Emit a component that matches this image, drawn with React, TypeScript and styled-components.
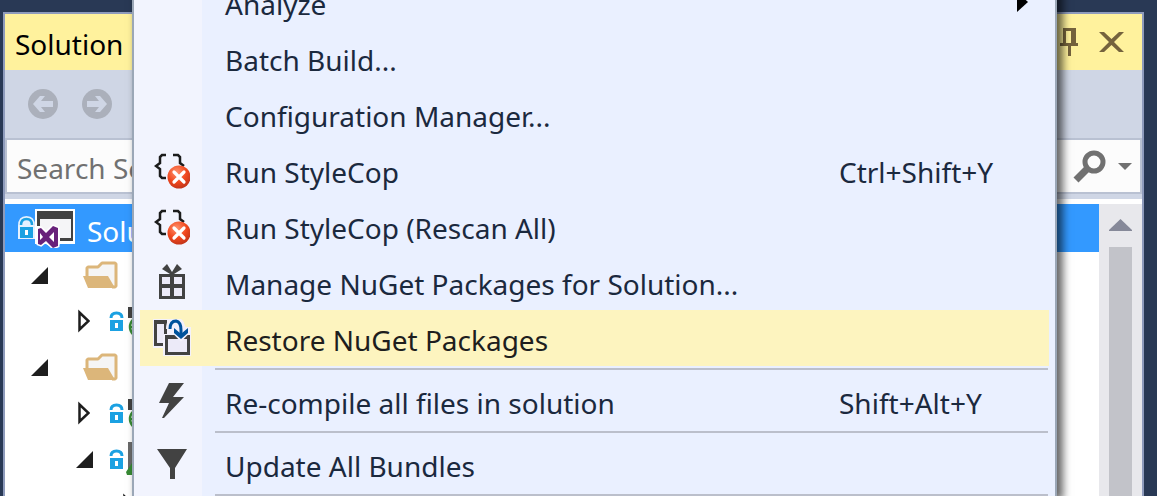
import React from 'react';
import styled, { createGlobalStyle } from 'styled-components';

const Global = createGlobalStyle`
  * { box-sizing: border-box; }
  body { margin: 0; background: #293955; font-family: "Noto Sans", "Open Sans", sans-serif; font-size: 28px; line-height: 40px; }
  button, input { font: inherit; color: inherit; border: 0; padding: 0; margin: 0; background: none; }
  svg { display: block; flex: none; }
`;

const Page = styled.div`
  position: relative;
  height: 100vh;
  overflow: hidden;
  padding: 12px 13px 0 3px;
  background: #293955;
`;

const Panel = styled.section`
  display: flex;
  flex-direction: column;
  height: 100%;
  border: 2px solid #8e9bbc;
  border-bottom: 0;
  background: #cfd6e5;
`;

const TitleBar = styled.header`
  display: flex;
  align-items: center;
  height: 56px;
  flex: none;
  padding: 0 18px 0 10px;
  background: #fff29d;
  color: #000;
`;

const Title = styled.h1`
  flex: 1;
  margin: 0;
  padding-top: 4px;
  font-size: 28px;
  font-weight: 400;
`;

const TitleActions = styled.div`
  display: flex;
  align-items: center;
  gap: 21px;
`;

const Toolbar = styled.div`
  display: flex;
  align-items: center;
  gap: 24px;
  height: 68px;
  flex: none;
  padding: 0 23px;
`;

const SearchBox = styled.div`
  display: flex;
  align-items: center;
  height: 56px;
  flex: none;
  margin-bottom: 5px;
  padding: 0 8px 0 10px;
  border: 2px solid #b9c1d2;
  background: #fcfcfc;
`;

const SearchInput = styled.input`
  flex: 1;
  min-width: 0;
  height: 40px;
  margin-top: 4px;
  outline: 0;
  &::placeholder { color: #717171; opacity: 1; }
`;

const SearchActions = styled.div`
  display: flex;
  align-items: center;
  gap: 12px;
`;

const TreeArea = styled.div`
  display: flex;
  flex: 1;
  min-height: 0;
  padding-top: 5px;
  background: #fff;
`;

const Tree = styled.div`
  flex: 1;
  min-width: 0;
  overflow: hidden;
`;

const TreeRow = styled.div<{ $indent: number; $selected?: boolean }>`
  display: flex;
  align-items: center;
  height: ${p => (p.$selected ? 48 : 46)}px;
  padding-left: ${p => p.$indent}px;
  background: ${p => (p.$selected ? '#3399ff' : 'transparent')};
  color: #fff;
`;

const TreeLabel = styled.span`
  padding: 6px 0 0 12px;
`;

const Gap = styled.span<{ $w: number }>`
  flex: none;
  width: ${p => p.$w}px;
`;

const ScrollTrack = styled.div`
  display: flex;
  flex-direction: column;
  align-items: center;
  gap: 16px;
  width: 43px;
  padding-top: 15px;
  background: #e8e8ec;
`;

const ScrollThumb = styled.div`
  flex: 1;
  width: 23px;
  background: #c2c3c9;
`;

const Menu = styled.div`
  position: absolute;
  top: -26px;
  left: 132px;
  right: 100px;
  border: solid #9ba7b7;
  border-width: 0 2px;
  background: linear-gradient(to right, #f2f4fe 68px, #eaf0ff 68px);
  box-shadow: 5px 0 8px 1px rgba(0, 0, 0, 0.6);
  color: #1b293e;
`;

const MenuItem = styled.button<{ $active?: boolean }>`
  display: flex;
  align-items: center;
  width: calc(100% - 12px);
  height: 56px;
  margin: 0 6px;
  text-align: left;
  color: ${p => (p.$active ? '#1e1e1e' : '#1b293e')};
  background: ${p => (p.$active ? '#fdf4bf' : 'transparent')};
`;

const IconSlot = styled.span`
  display: flex;
  justify-content: center;
  width: 64px;
  margin-right: 21px;
  flex: none;
`;

const MenuLabel = styled.span`
  flex: 1;
  padding-top: 4px;
  white-space: nowrap;
`;

const Shortcut = styled.span`
  width: 210px;
  padding-top: 4px;
`;

const Separator = styled.hr`
  height: 2px;
  margin: 2px 7px 3px 81px;
  border: 0;
  background: #bbbfcb;
`;

const IconButton = styled.button`
  display: flex;
`;

const NavArrow = ({ flip }: { flip?: boolean }) => (
  <svg width="30" height="30" viewBox="0 0 30 30">
    <circle cx="15" cy="15" r="15" fill="#abb0bb" />
    <path d={flip ? 'M25 15 18 7h-5l4 5H5v6h12l-4 5h5z' : 'M5 15l7-8h5l-4 5h12v6H13l4 5h-5z'} fill="#cfd6e5" />
  </svg>
);

const Lock = ({ halo }: { halo?: boolean }) => (
  <svg width="17" height="24" viewBox="0 0 17 24">
    {halo && <path d="M0 23V10Q0 0 8.500 0T17 10v13z" fill="#e4f1ff" />}
    {halo && <path d="M3 9q0-6 5.500-6T14 9" fill="none" stroke="#1ba1e2" strokeWidth="2.500" />}
    {!halo && <path d="M3 9q0-5 5.500-5T14 9" fill="none" stroke="#1ba1e2" strokeWidth="3" />}
    <path d="M2 11h13v11H2z" fill="#1ba1e2" />
    <path d="M7 14h3v5H7z" fill="#fff" />
  </svg>
);

const SolutionIcon = () => (
  <svg width="40" height="40" viewBox="0 0 40 40">
    <path d="M0 1h40v35H25l-4 4-5-1-5-3H0z" fill="#fff" />
    <path d="M2 3h36v30H25v-3h11V11H5v7H2z" fill="#424242" />
    <path d="M5 11h31v19H5z" fill="#f5f5f7" />
    <path d="M3 21l3-1 5 5 7-7 5 2v18l-5 2-7-7-5 4-3-1z" fill="#68217a" stroke="#fff" strokeWidth="3" paintOrder="stroke" />
    <path d="M5 25v7l3-3zM19 24l-5 5 5 5z" fill="#fff" />
  </svg>
);

const Folder = () => (
  <svg width="36" height="28" viewBox="0 0 36 28">
    <path d="M4 15V7l1-1h10l4-4h13l1 1v22l-1 1h-3" fill="#f5f5f5" stroke="#dcb67a" strokeWidth="3" strokeLinejoin="round" />
    <path d="M0 15h25l7 12H5z" fill="#dcb67a" />
  </svg>
);

const Expanded = () => (
  <svg width="17" height="17" viewBox="0 0 17 17"><path d="M17 0v17H0z" fill="#1e1e1e" /></svg>
);

const Collapsed = () => (
  <svg width="14" height="26" viewBox="0 0 14 26">
    <path d="M7.500 4.500v17l9-8.500z" transform="translate(-4 0)" fill="#fff" stroke="#1e1e1e" strokeWidth="2.500" />
  </svg>
);

const WebProject = () => (
  <svg width="34" height="32" viewBox="0 0 34 32">
    <path d="M0 2h32v24H20V9H4v4H0z" fill="#424242" />
    <circle cx="12" cy="22" r="10" fill="#fff" stroke="#388a34" strokeWidth="2.500" />
    <path d="M2 22h20M12 12v20M12 12q-10 10 0 20M12 12q10 10 0 20" fill="none" stroke="#388a34" strokeWidth="2" />
  </svg>
);

const TestProject = () => (
  <svg width="36" height="34" viewBox="0 0 36 34">
    <path d="M4 2h28v24H4z" fill="#f0eff1" stroke="#6a6a6a" strokeWidth="4" />
    <path d="M8 18 0 30l1 3h16l1-3-7-12z" fill="#388a34" />
  </svg>
);

const StyleCop = () => (
  <svg width="36" height="37" viewBox="0 0 36 37">
    <defs>
      <radialGradient id="redBall" cx="40%" cy="30%" r="70%">
        <stop offset="0" stopColor="#ff9470" />
        <stop offset="0.600" stopColor="#f1481e" />
        <stop offset="1" stopColor="#c5361a" />
      </radialGradient>
    </defs>
    <path d="M12 3H8L6 5v6l-4 3 4 3v7l2 2h4M19 3h5l2 2v6l4 3" fill="none" stroke="#1c1c1c" strokeWidth="2.500" />
    <circle cx="25" cy="25" r="11.500" fill="url(#redBall)" />
    <path d="M20 20l10 10M30 20 20 30" stroke="#fff" strokeWidth="3.200" strokeLinecap="round" />
  </svg>
);

const Gift = () => (
  <svg width="26" height="36" viewBox="0 0 26 36">
    <path d="M2 12h22v21H2z" fill="#eceaf8" />
    <path d="M0 10h26v25H0zM3 13v7h8v-7zM15 13v7h8v-7zM3 24v8h8v-8zM15 24v8h8v-8z" fill="#424242" fillRule="evenodd" />
    <path d="M8 0l5 8 5-8 5 5-8 5h-4L3 5z" fill="#424242" />
  </svg>
);

const Restore = () => (
  <svg width="38" height="38" viewBox="0 0 38 38">
    <path d="M0 0h15q3-2 8-1 8 0 9 9h6v29H10v-8H0z" fill="#f3f1fb" />
    <path d="M1 1h13v14h-3V5H4v19h6v3H1z" fill="#424242" />
    <path d="M4 5h7v11h-1v8H4z" fill="#eceaf8" />
    <path d="M12 16h25v20H12z" fill="#424242" />
    <path d="M15 20h19v13H15z" fill="#eceaf8" />
    <path d="M17 10q0-8 6-8 5 1 5 9v5M21 10l7 7 7-7" fill="none" stroke="#f3f1fb" strokeWidth="8" />
    <path d="M17 10q0-8 6-8 5 1 5 9v5" fill="none" stroke="#00539c" strokeWidth="3" />
    <path d="M21 9v5l7 6 7-6V9l-6 5h-2z" fill="#00539c" />
  </svg>
);

const Bolt = () => (
  <svg width="26" height="36" viewBox="0 0 26 36">
    <path d="M10 0h15L14 14h11L5 35H3l7-15H0z" fill="#424242" />
  </svg>
);

const Funnel = () => (
  <svg width="30" height="30" viewBox="0 0 30 30">
    <path d="M0 0h30L18 19v11h-5V19z" fill="#424242" />
  </svg>
);

const Pin = () => (
  <svg width="18" height="28" viewBox="0 0 18 28">
    <path d="M3 0h13v15h2v3h-7v10H8V18H0v-3h3zM6 3v12h5V3z" fill="#75633d" fillRule="evenodd" />
  </svg>
);

const Close = () => (
  <svg width="25" height="20" viewBox="0 0 25 20">
    <path d="M0 0h5l7.500 7L20 0h5L15 10l10 10h-5l-7.500-7L5 20H0l10-10z" fill="#75633d" />
  </svg>
);

const Magnifier = () => (
  <svg width="33" height="33" viewBox="0 0 33 33">
    <circle cx="21" cy="12" r="9" fill="none" stroke="#717171" strokeWidth="5" />
    <path d="M15 18 3 30" stroke="#717171" strokeWidth="7" />
  </svg>
);

type Item = { label: string; icon?: React.ReactNode; keys?: string; active?: boolean; sub?: boolean; line?: boolean };

const items: Item[] = [
  { label: 'Analyze', sub: true },
  { label: 'Batch Build...' },
  { label: 'Configuration Manager...' },
  { label: 'Run StyleCop', icon: <StyleCop />, keys: 'Ctrl+Shift+Y' },
  { label: 'Run StyleCop (Rescan All)', icon: <StyleCop /> },
  { label: 'Manage NuGet Packages for Solution...', icon: <Gift /> },
  { label: 'Restore NuGet Packages', icon: <Restore />, active: true, line: true },
  { label: 'Re-compile all files in solution', icon: <Bolt />, keys: 'Shift+Alt+Y', line: true },
  { label: 'Update All Bundles', icon: <Funnel />, line: true },
];

const SubArrow = styled.span`
  padding: 0 21px 0 0;
`;

export default function App() {
  return (
    <Page>
      <Global />
      <Panel>
        <TitleBar>
          <Title>Solution</Title>
          <TitleActions>
            <IconButton aria-label="Pin"><Pin /></IconButton>
            <IconButton aria-label="Close"><Close /></IconButton>
          </TitleActions>
        </TitleBar>
        <Toolbar>
          <IconButton aria-label="Back"><NavArrow /></IconButton>
          <IconButton aria-label="Forward"><NavArrow flip /></IconButton>
        </Toolbar>
        <SearchBox>
          <SearchInput aria-label="Search" placeholder="Search Solution Explorer" />
          <SearchActions>
            <IconButton aria-label="Find"><Magnifier /></IconButton>
            <IconButton aria-label="Search options">
              <svg width="14" height="7" viewBox="0 0 14 7"><path d="M0 0h14L7 7z" fill="#717171" /></svg>
            </IconButton>
          </SearchActions>
        </SearchBox>
        <TreeArea>
          <Tree>
            <TreeRow $indent={13} $selected><Lock halo /><SolutionIcon /><TreeLabel>Solution</TreeLabel></TreeRow>
            <TreeRow $indent={26}><Expanded /><Gap $w={35} /><Folder /></TreeRow>
            <TreeRow $indent={71}><Collapsed /><Gap $w={18} /><Lock /><Gap $w={3} /><WebProject /></TreeRow>
            <TreeRow $indent={26}><Expanded /><Gap $w={35} /><Folder /></TreeRow>
            <TreeRow $indent={71}><Collapsed /><Gap $w={18} /><Lock /><Gap $w={3} /><WebProject /></TreeRow>
            <TreeRow $indent={71}><Expanded /><Gap $w={15} /><Lock /><Gap $w={1} /><TestProject /></TreeRow>
            <TreeRow $indent={116}><Collapsed /></TreeRow>
          </Tree>
          <ScrollTrack>
            <svg width="23" height="12" viewBox="0 0 23 12"><path d="M11.500 0 23 11v1H0v-1z" fill="#868999" /></svg>
            <ScrollThumb />
          </ScrollTrack>
        </TreeArea>
      </Panel>
      <Menu role="menu">
        {items.map(it => (
          <React.Fragment key={it.label}>
            <MenuItem role="menuitem" $active={it.active}>
              <IconSlot>{it.icon}</IconSlot>
              <MenuLabel>{it.label}</MenuLabel>
              {it.keys && <Shortcut>{it.keys}</Shortcut>}
              {it.sub && (
                <SubArrow>
                  <svg width="11" height="20" viewBox="0 0 11 20"><path d="M0 0v20l11-10z" fill="#000" /></svg>
                </SubArrow>
              )}
            </MenuItem>
            {it.line && <Separator />}
          </React.Fragment>
        ))}
      </Menu>
    </Page>
  );
}
